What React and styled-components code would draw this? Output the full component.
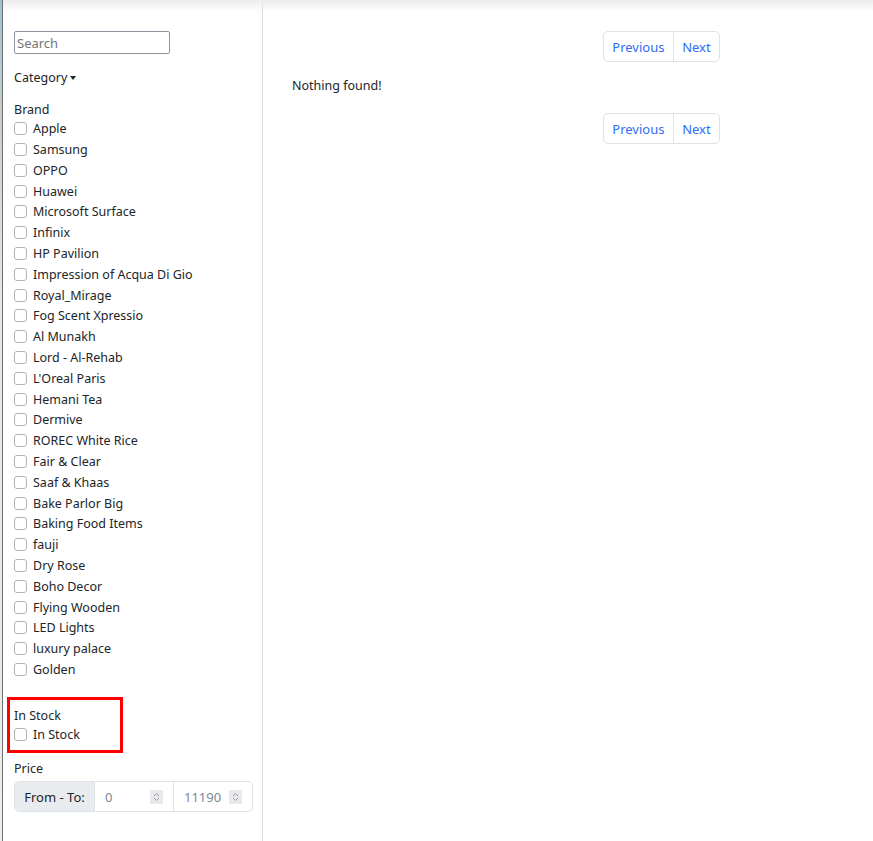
import React from "react";
import styled, { createGlobalStyle } from "styled-components";

const Global = createGlobalStyle`
  html, body { margin: 0; padding: 0; background: #fff; }
  body { font-family: "Noto Sans", "Open Sans", sans-serif; font-size: 12.5px; color: #212529; }
  * { box-sizing: border-box; }
`;

const Page = styled.div`
  display: flex;
  height: 841px;
  position: relative;
  overflow: hidden;
`;

const TopShade = styled.div`
  position: absolute;
  left: 3px;
  right: 0;
  top: 0;
  height: 12px;
  background: linear-gradient(#ececec, rgba(255,255,255,0));
  pointer-events: none;
`;

const Edge = styled.div`
  width: 3px;
  flex: none;
  background: linear-gradient(#9fc3cf 0, #b7cfd3 90px, #c9c9c4 100px, #e6e6e6 300px, #ececec);
  border-right: 1px solid #6e6e6e;
`;

const Sidebar = styled.aside`
  width: 260px;
  flex: none;
  border-right: 1px solid #dcdcdc;
  padding: 31px 0 0 11px;
  display: flex;
  flex-direction: column;
`;

const SearchInput = styled.input`
  width: 156px;
  height: 23px;
  border: 1px solid #8f8f9d;
  border-radius: 2px;
  padding: 1px 2px;
  font: inherit;
  font-size: 13px;
  color: #212529;
  &::placeholder { color: #757575; }
`;

const Dropdown = styled.div`
  margin-top: 14px;
  line-height: 20.8px;
  display: flex;
  align-items: center;
  &::after {
    content: "";
    margin-left: 3px;
    border-top: 4px solid #212529;
    border-left: 3px solid transparent;
    border-right: 3px solid transparent;
  }
`;

const Section = styled.div`
  margin-top: ${p => p.$mt || 0}px;
`;

const Heading = styled.div`
  line-height: 17px;
  height: 17px;
`;

const Row = styled.label`
  display: flex;
  align-items: center;
  height: 20.8px;
`;

const Box = styled.span`
  width: 13px;
  height: 13px;
  border: 1px solid #b4b4b4;
  border-radius: 3px;
  background: #fff;
  margin-right: 6px;
  flex: none;
`;

const Highlight = styled.div`
  margin-left: -7px;
  margin-top: 17px;
  width: 116px;
  height: 56px;
  border: 3px solid #f00;
  padding: 7px 0 0 4px;
`;

const InputGroup = styled.div`
  margin-top: 4px;
  display: flex;
  width: 239px;
  height: 31px;
  border: 1px solid #dee2e6;
  border-radius: 5px;
  overflow: hidden;
  font-size: 13px;
`;

const Addon = styled.div`
  width: 80px;
  background: #e9ecef;
  border-right: 1px solid #dee2e6;
  display: flex;
  align-items: center;
  justify-content: center;
  color: #212529;
`;

const NumField = styled.div`
  flex: 1;
  display: flex;
  align-items: center;
  padding: 0 10px;
  color: #7d8694;
  & + & { border-left: 1px solid #dee2e6; }
`;

const NumValue = styled.span`
  flex: 1;
`;

const Spinner = styled.span`
  width: 13px;
  height: 14px;
  background: #e9e9ed;
  display: flex;
  align-items: center;
  justify-content: center;
`;

const Main = styled.main`
  flex: 1;
  padding: 31px 0 0 29px;
  display: flex;
  flex-direction: column;
  font-size: 13px;
`;

const Pager = styled.nav`
  display: flex;
  margin-left: 311px;
  width: 117px;
  height: 31px;
  border: 1px solid #dee2e6;
  border-radius: 5px;
`;

const PageLink = styled.a`
  display: flex;
  align-items: center;
  justify-content: center;
  color: #2f6df6;
  width: ${p => p.$w}px;
  & + & { border-left: 1px solid #dee2e6; }
`;

const Empty = styled.p`
  margin: 14px 0 17px;
  line-height: 20px;
  font-size: 12.5px;
`;

const brands = [
  "Apple", "Samsung", "OPPO", "Huawei", "Microsoft Surface", "Infinix", "HP Pavilion",
  "Impression of Acqua Di Gio", "Royal_Mirage", "Fog Scent Xpressio", "Al Munakh",
  "Lord - Al-Rehab", "L'Oreal Paris", "Hemani Tea", "Dermive", "ROREC White Rice",
  "Fair & Clear", "Saaf & Khaas", "Bake Parlor Big", "Baking Food Items", "fauji",
  "Dry Rose", "Boho Decor", "Flying Wooden", "LED Lights", "luxury palace", "Golden",
];

const SpinIcon = () => (
  <svg width="7" height="10" viewBox="0 0 7 10">
    <path d="M1 4 L3.5 1.5 L6 4 M1 6 L3.5 8.5 L6 6" fill="none" stroke="#9a9a9a" strokeWidth="1" />
  </svg>
);

const Pagination = () => (
  <Pager>
    <PageLink $w={70}>Previous</PageLink>
    <PageLink $w={47}>Next</PageLink>
  </Pager>
);

export default function App() {
  return (
    <Page>
      <Global />
      <Edge />
      <Sidebar>
        <SearchInput placeholder="Search" />
        <Dropdown>Category</Dropdown>
        <Section $mt={12.5}>
          <Heading>Brand</Heading>
          {brands.map(b => (
            <Row key={b}><Box />{b}</Row>
          ))}
        </Section>
        <Highlight>
          <Heading>In Stock</Heading>
          <Row><Box />In Stock</Row>
        </Highlight>
        <Section $mt={7.5}>
          <Heading>Price</Heading>
          <InputGroup>
            <Addon>From - To:</Addon>
            <NumField><NumValue>0</NumValue><Spinner><SpinIcon /></Spinner></NumField>
            <NumField><NumValue>11190</NumValue><Spinner><SpinIcon /></Spinner></NumField>
          </InputGroup>
        </Section>
      </Sidebar>
      <Main>
        <Pagination />
        <Empty>Nothing found!</Empty>
        <Pagination />
      </Main>
      <TopShade />
    </Page>
  );
}
